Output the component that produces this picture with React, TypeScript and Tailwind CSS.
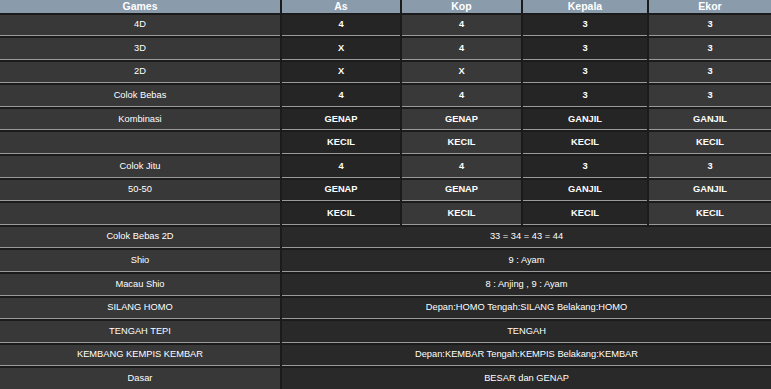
const headers = ["Games", "As", "Kop", "Kepala", "Ekor"];

const splitRows: { game: string; values: string[] }[] = [
  { game: "4D", values: ["4", "4", "3", "3"] },
  { game: "3D", values: ["X", "4", "3", "3"] },
  { game: "2D", values: ["X", "X", "3", "3"] },
  { game: "Colok Bebas", values: ["4", "4", "3", "3"] },
  { game: "Kombinasi", values: ["GENAP", "GENAP", "GANJIL", "GANJIL"] },
  { game: "", values: ["KECIL", "KECIL", "KECIL", "KECIL"] },
  { game: "Colok Jitu", values: ["4", "4", "3", "3"] },
  { game: "50-50", values: ["GENAP", "GENAP", "GANJIL", "GANJIL"] },
  { game: "", values: ["KECIL", "KECIL", "KECIL", "KECIL"] },
];

const mergedRows: { game: string; value: string }[] = [
  { game: "Colok Bebas 2D", value: "33 = 34 = 43 = 44" },
  { game: "Shio", value: "9 : Ayam" },
  { game: "Macau Shio", value: "8 : Anjing , 9 : Ayam" },
  { game: "SILANG HOMO", value: "Depan:HOMO Tengah:SILANG Belakang:HOMO" },
  { game: "TENGAH TEPI", value: "TENGAH" },
  { game: "KEMBANG KEMPIS KEMBAR", value: "Depan:KEMBAR Tengah:KEMPIS Belakang:KEMBAR" },
  { game: "Dasar", value: "BESAR dan GENAP" },
];

const cell = "flex items-center justify-center border-b border-[#9a9a9a] text-white text-[9.3px] leading-none";

export default function App() {
  return (
    <div className="w-[771px] h-[389px] overflow-hidden bg-[#1b1b1b] [font-family:'Liberation_Sans',Arial,sans-serif]">
      <div className="grid grid-cols-[280px_118px_119px_124px_1fr] grid-rows-[12.5px] auto-rows-[21.6px] gap-[2px]">
        {headers.map((h) => (
          <div
            key={h}
            className="flex items-center justify-center bg-[#8a9bab] text-white font-bold text-[10.5px] leading-none"
          >
            {h}
          </div>
        ))}

        {splitRows.map((row, i) => (
          <div key={i} className="contents">
            <div className={`${cell} bg-[#383838]`}>{row.game}</div>
            {row.values.map((v, j) => (
              <div
                key={j}
                className={`${cell} font-bold ${j % 2 === 0 ? "bg-[#252525]" : "bg-[#393939]"}`}
              >
                {v}
              </div>
            ))}
          </div>
        ))}

        {mergedRows.map((row) => (
          <div key={row.game} className="contents">
            <div className={`${cell} bg-[#383838]`}>{row.game}</div>
            <div className={`${cell} col-span-4 bg-[#292929]`}>{row.value}</div>
          </div>
        ))}
      </div>
    </div>
  );
}
